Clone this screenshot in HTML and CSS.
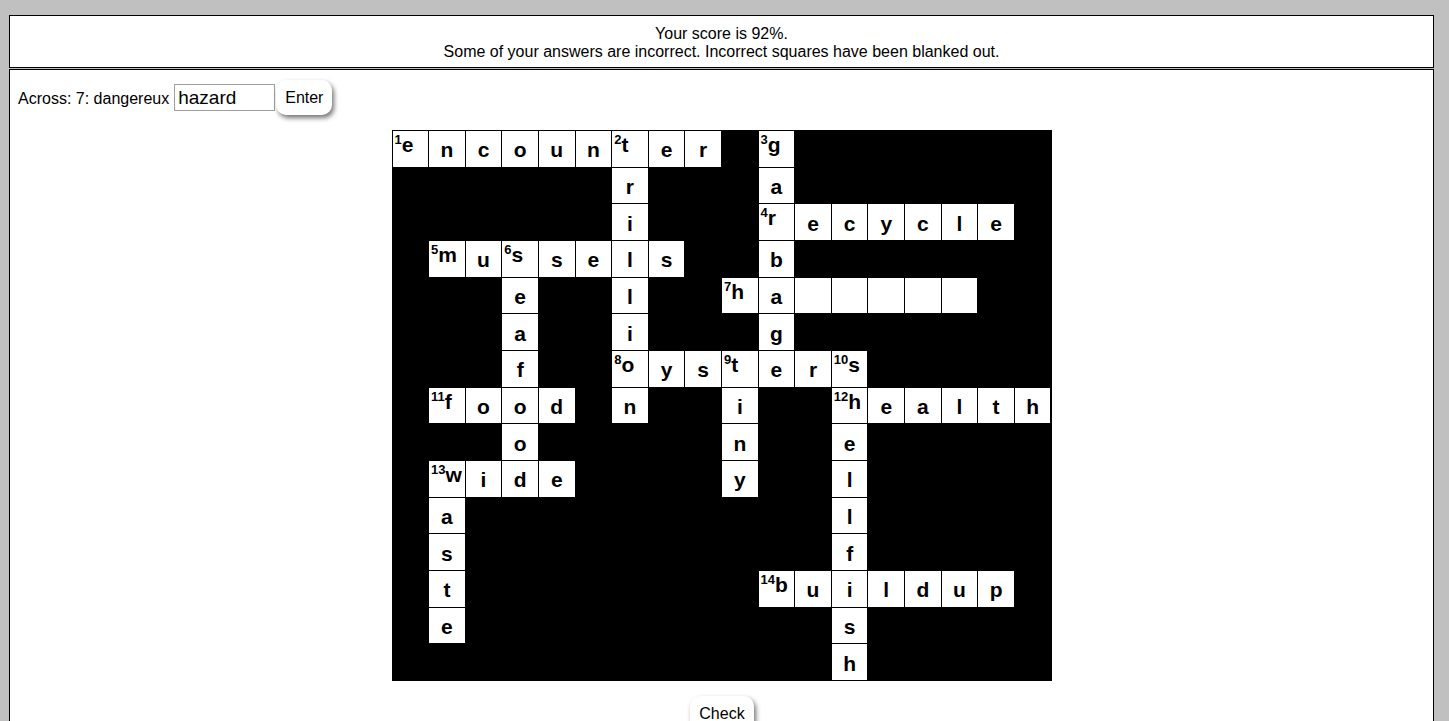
FILE: index.html
```html
<!DOCTYPE html>
<html>
<head>
<meta charset="utf-8">
<link rel="stylesheet" href="styles.css">
</head>
<body>
<div class="result">
  <div>Your score is 92%.</div>
  <div>Some of your answers are incorrect. Incorrect squares have been blanked out.</div>
</div>
<div class="main">
  <div class="clue-row">
    <span class="clue">Across: 7: dangereux</span>
    <input class="answer" type="text" value="hazard">
    <button class="btn">Enter</button>
  </div>
  <div class="grid">
    <!-- row 0 -->
    <div class="c n"><sup>1</sup>e</div><div class="c">n</div><div class="c">c</div><div class="c">o</div><div class="c">u</div><div class="c">n</div><div class="c n"><sup>2</sup>t</div><div class="c">e</div><div class="c">r</div><div class="k"></div><div class="c n"><sup>3</sup>g</div><div class="k"></div><div class="k"></div><div class="k"></div><div class="k"></div><div class="k"></div><div class="k"></div><div class="k"></div>
    <!-- row 1 -->
    <div class="k"></div><div class="k"></div><div class="k"></div><div class="k"></div><div class="k"></div><div class="k"></div><div class="c">r</div><div class="k"></div><div class="k"></div><div class="k"></div><div class="c">a</div><div class="k"></div><div class="k"></div><div class="k"></div><div class="k"></div><div class="k"></div><div class="k"></div><div class="k"></div>
    <!-- row 2 -->
    <div class="k"></div><div class="k"></div><div class="k"></div><div class="k"></div><div class="k"></div><div class="k"></div><div class="c">i</div><div class="k"></div><div class="k"></div><div class="k"></div><div class="c n"><sup>4</sup>r</div><div class="c">e</div><div class="c">c</div><div class="c">y</div><div class="c">c</div><div class="c">l</div><div class="c">e</div><div class="k"></div>
    <!-- row 3 -->
    <div class="k"></div><div class="c n"><sup>5</sup>m</div><div class="c">u</div><div class="c n"><sup>6</sup>s</div><div class="c">s</div><div class="c">e</div><div class="c">l</div><div class="c">s</div><div class="k"></div><div class="k"></div><div class="c">b</div><div class="k"></div><div class="k"></div><div class="k"></div><div class="k"></div><div class="k"></div><div class="k"></div><div class="k"></div>
    <!-- row 4 -->
    <div class="k"></div><div class="k"></div><div class="k"></div><div class="c">e</div><div class="k"></div><div class="k"></div><div class="c">l</div><div class="k"></div><div class="k"></div><div class="c n"><sup>7</sup>h</div><div class="c">a</div><div class="c"></div><div class="c"></div><div class="c"></div><div class="c"></div><div class="c"></div><div class="k"></div><div class="k"></div>
    <!-- row 5 -->
    <div class="k"></div><div class="k"></div><div class="k"></div><div class="c">a</div><div class="k"></div><div class="k"></div><div class="c">i</div><div class="k"></div><div class="k"></div><div class="k"></div><div class="c">g</div><div class="k"></div><div class="k"></div><div class="k"></div><div class="k"></div><div class="k"></div><div class="k"></div><div class="k"></div>
    <!-- row 6 -->
    <div class="k"></div><div class="k"></div><div class="k"></div><div class="c">f</div><div class="k"></div><div class="k"></div><div class="c n"><sup>8</sup>o</div><div class="c">y</div><div class="c">s</div><div class="c n"><sup>9</sup>t</div><div class="c">e</div><div class="c">r</div><div class="c n"><sup>10</sup>s</div><div class="k"></div><div class="k"></div><div class="k"></div><div class="k"></div><div class="k"></div>
    <!-- row 7 -->
    <div class="k"></div><div class="c n"><sup>11</sup>f</div><div class="c">o</div><div class="c">o</div><div class="c">d</div><div class="k"></div><div class="c">n</div><div class="k"></div><div class="k"></div><div class="c">i</div><div class="k"></div><div class="k"></div><div class="c n"><sup>12</sup>h</div><div class="c">e</div><div class="c">a</div><div class="c">l</div><div class="c">t</div><div class="c">h</div>
    <!-- row 8 -->
    <div class="k"></div><div class="k"></div><div class="k"></div><div class="c">o</div><div class="k"></div><div class="k"></div><div class="k"></div><div class="k"></div><div class="k"></div><div class="c">n</div><div class="k"></div><div class="k"></div><div class="c">e</div><div class="k"></div><div class="k"></div><div class="k"></div><div class="k"></div><div class="k"></div>
    <!-- row 9 -->
    <div class="k"></div><div class="c n"><sup>13</sup>w</div><div class="c">i</div><div class="c">d</div><div class="c">e</div><div class="k"></div><div class="k"></div><div class="k"></div><div class="k"></div><div class="c">y</div><div class="k"></div><div class="k"></div><div class="c">l</div><div class="k"></div><div class="k"></div><div class="k"></div><div class="k"></div><div class="k"></div>
    <!-- row 10 -->
    <div class="k"></div><div class="c">a</div><div class="k"></div><div class="k"></div><div class="k"></div><div class="k"></div><div class="k"></div><div class="k"></div><div class="k"></div><div class="k"></div><div class="k"></div><div class="k"></div><div class="c">l</div><div class="k"></div><div class="k"></div><div class="k"></div><div class="k"></div><div class="k"></div>
    <!-- row 11 -->
    <div class="k"></div><div class="c">s</div><div class="k"></div><div class="k"></div><div class="k"></div><div class="k"></div><div class="k"></div><div class="k"></div><div class="k"></div><div class="k"></div><div class="k"></div><div class="k"></div><div class="c">f</div><div class="k"></div><div class="k"></div><div class="k"></div><div class="k"></div><div class="k"></div>
    <!-- row 12 -->
    <div class="k"></div><div class="c">t</div><div class="k"></div><div class="k"></div><div class="k"></div><div class="k"></div><div class="k"></div><div class="k"></div><div class="k"></div><div class="k"></div><div class="c n"><sup>14</sup>b</div><div class="c">u</div><div class="c">i</div><div class="c">l</div><div class="c">d</div><div class="c">u</div><div class="c">p</div><div class="k"></div>
    <!-- row 13 -->
    <div class="k"></div><div class="c">e</div><div class="k"></div><div class="k"></div><div class="k"></div><div class="k"></div><div class="k"></div><div class="k"></div><div class="k"></div><div class="k"></div><div class="k"></div><div class="k"></div><div class="c">s</div><div class="k"></div><div class="k"></div><div class="k"></div><div class="k"></div><div class="k"></div>
    <!-- row 14 -->
    <div class="k"></div><div class="k"></div><div class="k"></div><div class="k"></div><div class="k"></div><div class="k"></div><div class="k"></div><div class="k"></div><div class="k"></div><div class="k"></div><div class="k"></div><div class="k"></div><div class="c">h</div><div class="k"></div><div class="k"></div><div class="k"></div><div class="k"></div><div class="k"></div>
  </div>
  <div class="check-row">
    <button class="btn">Check</button>
  </div>
</div>
</body>
</html>
```

FILE: styles.css
```css
html, body {
  margin: 0;
  padding: 0;
}
body {
  background: #c0c0c0;
  padding: 15px 15px 0 9px;
  font-family: "Liberation Sans", Arial, sans-serif;
  font-size: 16px;
  color: #000;
}
.result {
  background: #fff;
  border: 1px solid #000;
  text-align: center;
  padding: 9px 0 6px;
  line-height: 18px;
}
.main {
  background: #fff;
  border: 1px solid #000;
  margin-top: 1px;
  min-height: 700px;
  padding: 10px 8px 0;
}
.clue-row {
  display: flex;
  align-items: center;
}
.clue {
  margin-right: 5px;
  position: relative;
  top: 1px;
}
.answer {
  width: 101px;
  height: 27px;
  box-sizing: border-box;
  border: 1px solid #a0a0a0;
  padding: 1px 3px 0;
  margin: -1px 0 0;
  font-family: "Liberation Sans", Arial, sans-serif;
  font-size: 19px;
  color: #000;
  background: #fff;
}
.btn {
  font-family: "Liberation Sans", Arial, sans-serif;
  font-size: 16px;
  color: #000;
  background: #fff;
  border: none;
  border-radius: 10px;
  padding: 8px 9px 8px 9px;
  margin: 0 0 0 1px;
  line-height: 19px;
  box-shadow: 2px 3px 5px rgba(0, 0, 0, 0.55);
}
.grid {
  width: 660px;
  height: 551px;
  box-sizing: border-box;
  margin: 15px auto 0;
  background: #000;
  padding: 1px;
  display: grid;
  grid-template-columns: repeat(18, 1fr);
  grid-template-rows: repeat(15, 1fr);
  gap: 1px;
}
.c {
  background: #fff;
  font-weight: bold;
  font-size: 21px;
  display: flex;
  align-items: center;
  justify-content: center;
  line-height: 1;
  padding-top: 2px;
}
.c.n {
  justify-content: flex-start;
  align-items: flex-start;
  padding: 3px 0 0 2px;
}
.c sup {
  font-size: 13px;
  line-height: 1;
  vertical-align: top;
  position: relative;
  top: -1px;
}
.check-row {
  display: flex;
  justify-content: center;
  margin-top: 15px;
}
```
